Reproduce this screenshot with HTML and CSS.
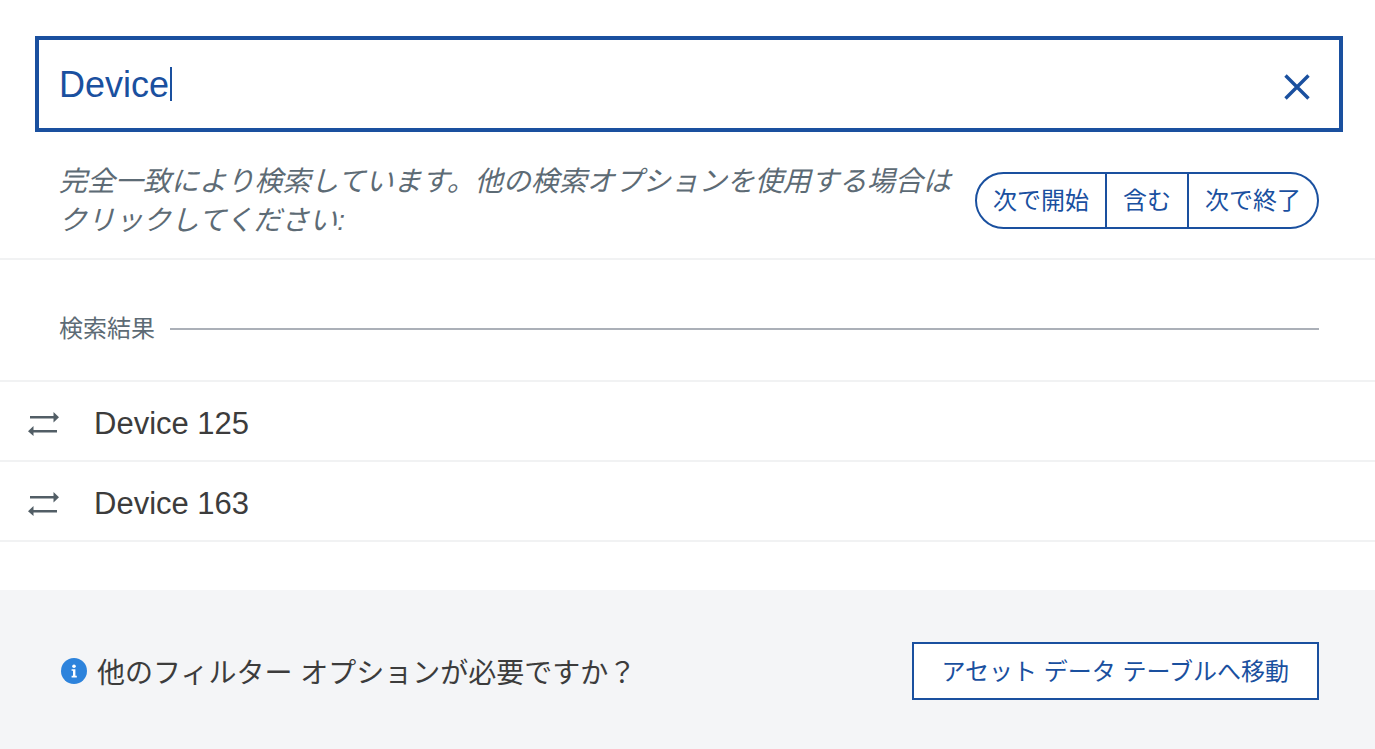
FILE: index.html
```html
<!DOCTYPE html>
<html lang="ja">

<head>
    <meta charset="utf-8">
    <title>検索</title>
    <link rel="stylesheet" href="styles.css">
</head>

<body>
    <form class="search-box">
        <input type="text" class="search-input" value="Device" size="6" aria-label="検索">
        <span class="caret"></span>
        <button type="button" class="clear-btn" aria-label="クリア">
            <svg width="28" height="28" viewBox="0 0 28 28">
                <path d="M2.5 2.5 L25.5 25.5 M25.5 2.5 L2.5 25.5" stroke="#1a509f" stroke-width="3.4" fill="none" />
            </svg>
        </button>
    </form>

    <div class="options">
        <p>完全一致により検索しています。他の検索オプションを使用する場合はクリックしてください:</p>
        <div class="option-group">
            <button type="button">次で開始</button>
            <button type="button">含む</button>
            <button type="button">次で終了</button>
        </div>
    </div>

    <div class="results-head">
        <h2>検索結果</h2>
        <div class="rule"></div>
    </div>

    <ul class="results">
        <li>
            <svg class="swap-icon" width="31" height="24" viewBox="0 0 31 24">
                <path d="M2 4H25.5V0L31 5.2L25.5 10.4V6.4H2ZM29 18H5.5V14L0 19.2L5.5 24V20.4H29Z" />
            </svg>
            <span>Device 125</span>
        </li>
        <li>
            <svg class="swap-icon" width="31" height="24" viewBox="0 0 31 24">
                <path d="M2 4H25.5V0L31 5.2L25.5 10.4V6.4H2ZM29 18H5.5V14L0 19.2L5.5 24V20.4H29Z" />
            </svg>
            <span>Device 163</span>
        </li>
    </ul>

    <footer class="footer">
        <svg class="info-icon" width="26" height="26" viewBox="0 0 26 26">
            <circle cx="13" cy="13" r="13" fill="#2d83dc" />
            <circle cx="13" cy="8.2" r="1.8" fill="#fff" />
            <path d="M10.6 11.2H14.4V17.8H15.8V19.4H10.6V17.8H12V12.8H10.6Z" fill="#fff" />
        </svg>
        <span class="footer-text">他のフィルター オプションが必要ですか？</span>
        <button type="button" class="table-btn">アセット データ テーブルへ移動</button>
    </footer>
</body>

</html>
```
FILE: styles.css
```css
* {
    box-sizing: border-box;
}

body {
    margin: 0;
    min-height: 100vh;
    display: flex;
    flex-direction: column;
    background: #fff;
    color: #3c3c3c;
    font-family: "Liberation Sans", "Noto Sans CJK JP", sans-serif;
}

button {
    font-family: inherit;
    cursor: pointer;
}

/* Search field */
.search-box {
    display: flex;
    align-items: center;
    height: 96px;
    margin: 36px 32px 0 35px;
    padding: 0 28px 0 20px;
    border: 4px solid #1a509f;
}

.search-input {
    field-sizing: content;
    padding: 2px 1px 0 0;
    border: none;
    outline: none;
    background: none;
    color: #1a509f;
    caret-color: transparent;
    font-family: inherit;
    font-size: 36px;
}

.caret {
    width: 2px;
    height: 34px;
    background: #1a509f;
}

.clear-btn {
    display: flex;
    margin-left: auto;
    padding: 5px 0 0;
    border: none;
    background: none;
}

/* Search options */
.options {
    display: flex;
    align-items: center;
    gap: 16px;
    padding: 28px 56px 18px 59px;
    border-bottom: 2px solid #f1f2f3;
}

.options p {
    flex: 1;
    margin: 0;
    padding-top: 2px;
    color: #5d6b75;
    font-size: 28px;
    line-height: 39px;
    font-style: italic;
}

.option-group {
    display: flex;
}

.option-group button {
    height: 57px;
    padding: 0 16px 4px;
    border: 2px solid #1a509f;
    border-left: none;
    background: #fff;
    color: #1a509f;
    font-size: 24px;
}

.option-group button:first-child {
    border-left: 2px solid #1a509f;
    border-radius: 29px 0 0 29px;
}

.option-group button:last-child {
    border-radius: 0 29px 29px 0;
}

/* Results */
.results-head {
    display: flex;
    align-items: center;
    gap: 15px;
    padding: 49px 56px 31px 59px;
}

.results-head h2 {
    margin: 0;
    color: #5d6b75;
    font-size: 24px;
    font-weight: normal;
    line-height: 40px;
}

.rule {
    flex: 1;
    height: 2px;
    background: #abb0b8;
}

.results {
    margin: 0 0 48px;
    padding: 0;
    list-style: none;
    border-top: 2px solid #f1f2f3;
}

.results li {
    display: flex;
    align-items: center;
    gap: 35px;
    height: 80px;
    padding: 5px 0 0 28px;
    border-bottom: 2px solid #f1f2f3;
    font-size: 31px;
}

.swap-icon {
    fill: #525e66;
}

/* Footer */
.footer {
    flex: 1;
    display: flex;
    align-items: center;
    padding: 3px 56px 0 61px;
    background: #f4f5f7;
    font-size: 28px;
}

.footer-text {
    margin-left: 10px;
}

.table-btn {
    height: 58px;
    margin-left: auto;
    padding: 0 28px 4px;
    border: 2px solid #1a509f;
    background: #fff;
    color: #1a509f;
    font-size: 24px;
}
```
